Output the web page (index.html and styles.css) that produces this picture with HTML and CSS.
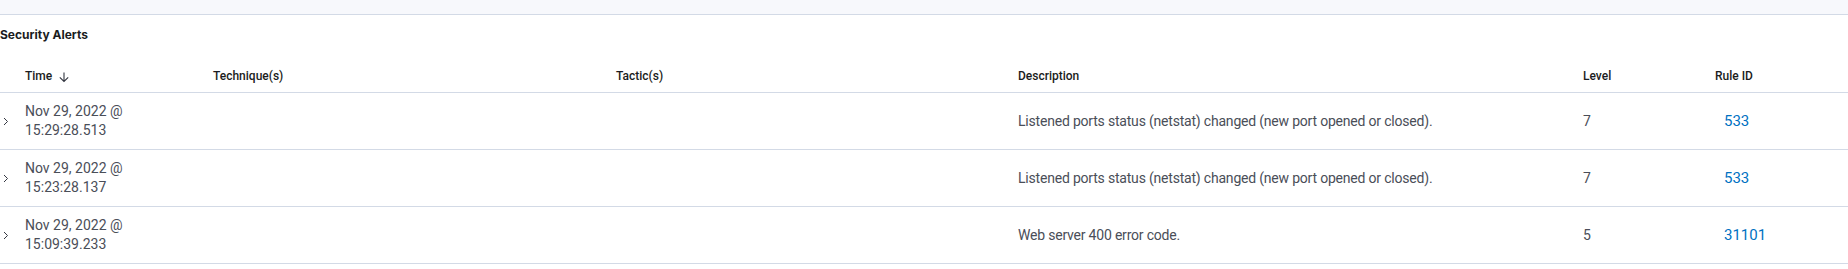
FILE: index.html
```html
<!DOCTYPE html>
<html lang="en">
<head>
<meta charset="utf-8">
<title>Security Alerts</title>
<link rel="stylesheet" href="styles.css">
</head>
<body>
<div class="topband"></div>
<section class="panel">
  <h2 class="title">Security Alerts</h2>
  <div class="table">
    <div class="row head">
      <div class="cell"></div>
      <div class="cell th">Time
        <svg class="sort" width="12" height="12" viewBox="0 0 12 12"><path d="M6 1.5 V10.5 M1.8 6.3 L6 10.5 L10.2 6.3" fill="none" stroke="#343741" stroke-width="1.1"/></svg>
      </div>
      <div class="cell th">Technique(s)</div>
      <div class="cell th">Tactic(s)</div>
      <div class="cell th">Description</div>
      <div class="cell th">Level</div>
      <div class="cell th">Rule ID</div>
    </div>
    <div class="row">
      <div class="cell chev"><svg width="6" height="9" viewBox="0 0 6 9"><path d="M1 1 L4.5 4.5 L1 8" fill="none" stroke="#343741" stroke-width="1"/></svg></div>
      <div class="cell time">Nov 29, 2022 @<br>15:29:28.513</div>
      <div class="cell"></div>
      <div class="cell"></div>
      <div class="cell desc">Listened ports status (netstat) changed (new port opened or closed).</div>
      <div class="cell">7</div>
      <div class="cell"><a class="rule" href="#">533</a></div>
    </div>
    <div class="row">
      <div class="cell chev"><svg width="6" height="9" viewBox="0 0 6 9"><path d="M1 1 L4.5 4.5 L1 8" fill="none" stroke="#343741" stroke-width="1"/></svg></div>
      <div class="cell time">Nov 29, 2022 @<br>15:23:28.137</div>
      <div class="cell"></div>
      <div class="cell"></div>
      <div class="cell desc">Listened ports status (netstat) changed (new port opened or closed).</div>
      <div class="cell">7</div>
      <div class="cell"><a class="rule" href="#">533</a></div>
    </div>
    <div class="row">
      <div class="cell chev"><svg width="6" height="9" viewBox="0 0 6 9"><path d="M1 1 L4.5 4.5 L1 8" fill="none" stroke="#343741" stroke-width="1"/></svg></div>
      <div class="cell time">Nov 29, 2022 @<br>15:09:39.233</div>
      <div class="cell"></div>
      <div class="cell"></div>
      <div class="cell desc">Web server 400 error code.</div>
      <div class="cell">5</div>
      <div class="cell"><a class="rule" href="#">31101</a></div>
    </div>
  </div>
</section>
</body>
</html>
```

FILE: styles.css
```css
html, body {
  margin: 0;
  padding: 0;
  background: #ffffff;
  font-family: Roboto, "Liberation Sans", sans-serif;
  color: #4a4e58;
}
.topband {
  height: 14px;
  background: #f7f8fc;
  border-bottom: 1px solid #d3dae6;
}
.panel {
  padding: 0;
}
.title {
  margin: 10px 0 0 0;
  height: 20px;
  line-height: 20px;
  font-family: Inter, "Noto Sans", sans-serif;
  font-size: 12px;
  font-weight: 700;
  color: #1a1c21;
}
.table {
  margin-top: 16px;
}
.row {
  display: grid;
  grid-template-columns: 25px 188px 403px 402px 565px 132px 1fr;
  height: 56px;
  border-bottom: 1px solid #d3dae6;
  align-items: center;
  font-size: 14px;
  line-height: 19px;
}
.row.head {
  height: 31px;
}
.th {
  font-size: 12px;
  font-weight: 500;
  color: #1a1c21;
  display: flex;
  align-items: center;
  gap: 6px;
}
.sort {
  display: block;
}
.chev {
  padding-left: 3px;
  display: flex;
  align-items: center;
}
.chev svg {
  display: block;
}
.desc {
  letter-spacing: -0.2px;
}
.rule {
  color: #0071c2;
  text-decoration: none;
  font-size: 15px;
  padding-left: 9px;
}
```
